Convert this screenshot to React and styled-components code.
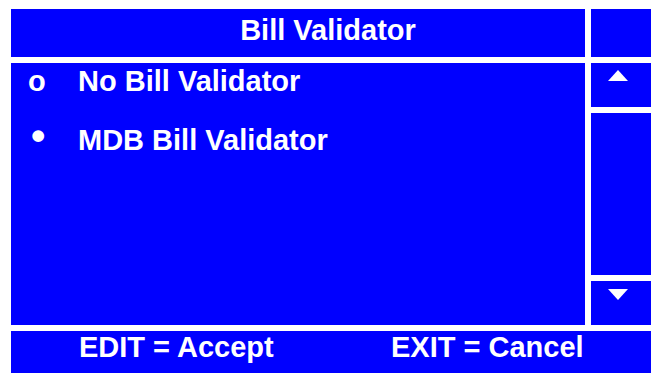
import React from 'react'
import styled, { createGlobalStyle } from 'styled-components'

const GlobalStyle = createGlobalStyle`
    html, body {
        margin: 0;
        padding: 0;
        background: #fff;
        overflow: hidden;
    }
    body {
        font-family: "Liberation Sans", Arial, sans-serif;
    }
`

const Screen = styled.div`
    display: grid;
    grid-template-columns: 574px 60px;
    grid-template-rows: 48px 262px 42px;
    gap: 6px;
    padding: 9px 0 0 11px;
    width: 651px;
    height: 373px;
    box-sizing: border-box;
    overflow: hidden;
`

const Panel = styled.div`
    background: #0000ff;
    color: #fff;
    font-weight: bold;
    font-size: 29px;
    line-height: 32px;
    box-sizing: border-box;
`

const Title = styled(Panel)`
    padding: 5px 0 0 60px;
    text-align: center;
`

const List = styled(Panel)`
    display: flex;
    flex-direction: column;
    gap: 27px;
    padding: 2px 0 0 17px;
`

const Item = styled.div`
    display: flex;
    align-items: baseline;
`

const Marker = styled.span`
    width: 50px;
    flex-shrink: 0;
    font-size: ${p => (p.selected ? '41px' : '29px')};
    line-height: ${p => (p.selected ? '0' : '32px')};
    padding-left: ${p => (p.selected ? '3px' : '0')};
    box-sizing: border-box;
`

const SideColumn = styled.div`
    display: flex;
    flex-direction: column;
    gap: 6px;
`

const SideCell = styled.div`
    background: #0000ff;
    flex: ${p => p.grow ? 1 : '0 0 44px'};
`

const ScrollButton = styled(SideCell)`
    display: flex;
    padding: ${p => p.down ? '8px' : '7px'} 0 0 17px;
    box-sizing: border-box;
`

const Arrow = styled.span`
    width: 0;
    height: 0;
    border-left: 10px solid transparent;
    border-right: 10px solid transparent;
    ${p => p.down
        ? 'border-top: 11px solid #fff;'
        : 'border-bottom: 11px solid #fff;'}
`

const Footer = styled(Panel)`
    grid-column: 1 / -1;
    display: flex;
    padding: 0 0 0 68px;
`

const FooterText = styled.span`
    width: ${p => p.w}px;
    flex-shrink: 0;
`

const options = [
    { label: 'No Bill Validator', selected: false },
    { label: 'MDB Bill Validator', selected: true },
]

const App = () => (
    <>
        <GlobalStyle />
        <Screen>
            <Title>Bill Validator</Title>
            <SideCell />
            <List>
                {options.map((opt, i) => (
                    <Item key={i}>
                        <Marker selected={opt.selected}>{opt.selected ? '•' : 'o'}</Marker>
                        <span>{opt.label}</span>
                    </Item>
                ))}
            </List>
            <SideColumn>
                <ScrollButton>
                    <Arrow />
                </ScrollButton>
                <SideCell grow />
                <ScrollButton down>
                    <Arrow down />
                </ScrollButton>
            </SideColumn>
            <Footer>
                <FooterText w={312}>EDIT = Accept</FooterText>
                <FooterText>EXIT = Cancel</FooterText>
            </Footer>
        </Screen>
    </>
)

export default App
